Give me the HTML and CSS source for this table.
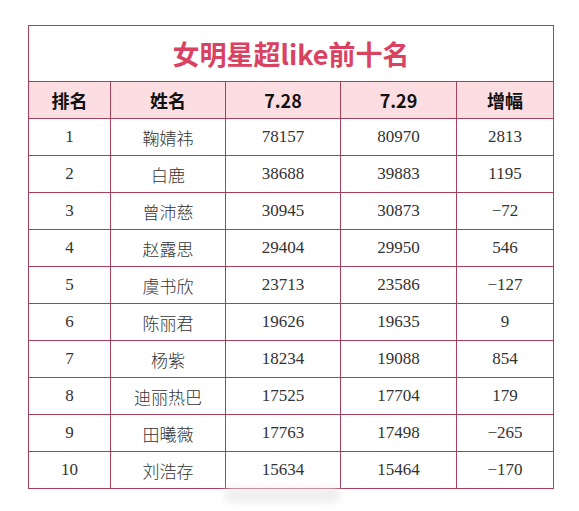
FILE: index.html
```html
<!DOCTYPE html>
<html lang="zh">
<head>
<meta charset="utf-8">
<link rel="stylesheet" href="styles.css">
</head>
<body>
<div class="page">
  <table class="rank">
    <colgroup>
      <col class="c1"><col class="c2"><col class="c3"><col class="c4"><col class="c5">
    </colgroup>
    <thead>
      <tr class="title-row"><th colspan="5" class="title">女明星超like前十名</th></tr>
      <tr class="head-row"><th>排名</th><th>姓名</th><th>7.28</th><th>7.29</th><th>增幅</th></tr>
    </thead>
    <tbody>
      <tr><td>1</td><td class="name">鞠婧祎</td><td>78157</td><td>80970</td><td>2813</td></tr>
      <tr><td>2</td><td class="name">白鹿</td><td>38688</td><td>39883</td><td>1195</td></tr>
      <tr><td>3</td><td class="name">曾沛慈</td><td>30945</td><td>30873</td><td>−72</td></tr>
      <tr><td>4</td><td class="name">赵露思</td><td>29404</td><td>29950</td><td>546</td></tr>
      <tr><td>5</td><td class="name">虞书欣</td><td>23713</td><td>23586</td><td>−127</td></tr>
      <tr><td>6</td><td class="name">陈丽君</td><td>19626</td><td>19635</td><td>9</td></tr>
      <tr><td>7</td><td class="name">杨紫</td><td>18234</td><td>19088</td><td>854</td></tr>
      <tr><td>8</td><td class="name">迪丽热巴</td><td>17525</td><td>17704</td><td>179</td></tr>
      <tr><td>9</td><td class="name">田曦薇</td><td>17763</td><td>17498</td><td>−265</td></tr>
      <tr><td>10</td><td class="name">刘浩存</td><td>15634</td><td>15464</td><td>−170</td></tr>
    </tbody>
  </table>
  <div class="watermark"></div>
</div>
</body>
</html>
```
FILE: styles.css
```css
html, body {
  margin: 0;
  padding: 0;
  background: #ffffff;
}
.page {
  position: relative;
  width: 579px;
  height: 511px;
  padding: 25px 0 0 28px;
  box-sizing: border-box;
}
.rank {
  border-collapse: collapse;
  table-layout: fixed;
  width: 525px;
}
.c1 { width: 82px; }
.c2 { width: 115px; }
.c3 { width: 115px; }
.c4 { width: 116px; }
.c5 { width: 97px; }
.rank th, .rank td {
  border: 1px solid #a8405c;
  text-align: center;
  padding: 0;
}
.title-row th {
  height: 55px;
  font-family: "Noto Sans CJK SC", "Noto Sans", sans-serif;
  font-weight: 700;
  font-size: 27px;
  color: #da4262;
  letter-spacing: 0;
}
.head-row th {
  height: 36px;
  background: #fbdde2;
  font-family: "Noto Sans CJK SC", "Noto Sans", sans-serif;
  font-weight: 700;
  font-size: 18px;
  color: #111111;
}
.rank td {
  height: 36px;
  font-family: "Liberation Serif", "Noto Sans CJK SC", serif;
  font-size: 17px;
  color: #333333;
}
.rank td.name {
  font-family: "Noto Sans CJK SC", serif;
  font-weight: 300;
  font-size: 17px;
}
.watermark {
  position: absolute;
  left: 224px;
  top: 487px;
  width: 116px;
  height: 16px;
  border-radius: 8px;
  background: #e8e8e8;
  filter: blur(3px);
  opacity: 0.7;
}
```
